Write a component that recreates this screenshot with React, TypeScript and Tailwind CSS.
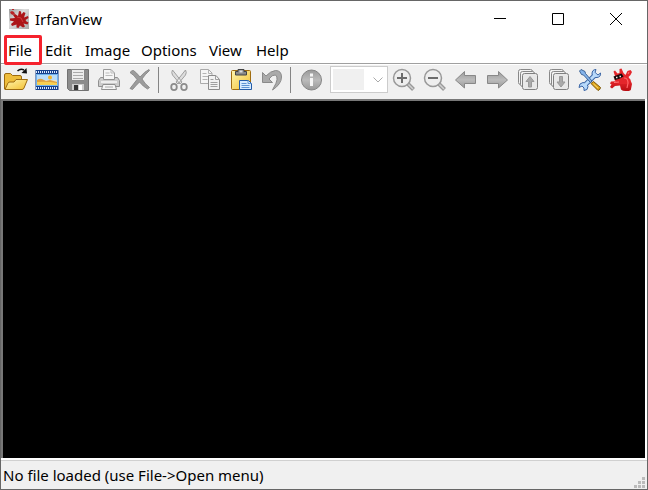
import React from "react";

type IconProps = { children: React.ReactNode };

function Icon({ children }: IconProps) {
  return (
    <svg width="24" height="24" viewBox="0 0 24 24" fill="none" aria-hidden="true">
      {children}
    </svg>
  );
}

const OpenIcon = () => (
  <Icon>
    <path d="M.5 21V7q0-1.500 1.500-1.500h4.500l2 2H16q1.500 0 1.500 1.500v4L4 21z" fill="#eebd3c" stroke="#9c6a10" />
    <path d="M1 21.500L4 15q.5-1 2-1h4l2-2.500h11.500L20 20q-.5 1.500-2 1.500z" fill="url(#gold)" stroke="#9c6a10" />
    <path d="M13.500 3q3-3 6.500-1" stroke="#111" strokeWidth="1.500" />
    <path d="M17.500 5l5.500.5L22.500 0z" fill="#111" />
  </Icon>
);

const SlideshowIcon = () => (
  <Icon>
    <path d="M.5 2h23v20H.5z" fill="#16408c" />
    <path d="M1 6h22v12H1z" fill="#6fb2ee" />
    <path d="M2 7h20v10H2z" fill="#e8e3c8" />
    <path d="M2 7h20v5H2z" fill="#b9dcfa" />
    <path d="M2 12q3-2 5-1l4 2 4-1 7 2v3H2z" fill="#dda040" />
    <path d="M2 14q10-1 20 1v2H2z" fill="#f7cf52" />
    <circle cx="15" cy="9.500" r="2" fill="#f3b52a" />
    <path d="M1 4h22M1 20h22" stroke="#dceaff" strokeWidth="2" strokeDasharray="1 1" />
  </Icon>
);

const SaveIcon = () => (
  <Icon>
    <path d="M1.500 1.500h21v21h-19l-2-2z" fill="#8c8c8c" stroke="#727272" />
    <path d="M5.500 1.500h13v11h-13z" fill="#ededed" stroke="#888" />
    <path d="M7 4.500h10M7 7.500h10M7 10.500h10" stroke="#aaa" />
    <path d="M6 16h12v6H6z" fill="#ccc" />
    <path d="M8 17h4v5H8z" fill="#333" />
    <path d="M13 17h3v5h-3z" fill="#fff" />
  </Icon>
);

const PrintIcon = () => (
  <Icon>
    <path d="M6.500 11V1.500H14l3.500 3.500v6" fill="#f5f5f5" stroke="#999" />
    <path d="M14 1.500V5h3.500M8.500 5h4M8.500 7.500h7" stroke="#bbb" />
    <path d="M3.500 9.500h3v2h11v-2h3l2 3v6h-21v-6z" fill="#ccc" stroke="#909090" />
    <path d="M4 14h16" stroke="#eee" strokeWidth="2" />
    <path d="M6 16.500h12l1.500 5h-15z" fill="#f5f5f5" stroke="#909090" />
    <path d="M8 19h8" stroke="#aaa" />
  </Icon>
);

const DeleteIcon = () => (
  <Icon>
    <path d="M2 4.500q2-2.500 3.500-2Q8.500 4.500 12 9q4.500-5.500 9-7.500l.5 1q-4.500 4-7.500 8.500Q17 16 21.500 19.500l-2 1.500Q15 18.500 11.500 14 7.500 18 4.500 21.500L2 20.500Q5.500 16 9 11.500 6 7 2 4.500z" fill="#9c9c9c" stroke="#808080" strokeWidth=".8" />
  </Icon>
);

const CutIcon = () => (
  <Icon>
    <path d="M5.500 2q-1.500 2.500 0 5l7.500 9 2-2zM18.500 2q1.500 2.500 0 5L11 16l-2-2z" fill="#ddd" stroke="#a0a0a0" />
    <ellipse cx="7" cy="19" rx="2.800" ry="3.200" stroke="#8c8c8c" strokeWidth="1.800" />
    <ellipse cx="17" cy="19" rx="2.800" ry="3.200" stroke="#8c8c8c" strokeWidth="1.800" />
  </Icon>
);

const CopyIcon = () => (
  <Icon>
    <path d="M2.500 1.500h8l3.500 3.500v10.500H2.500z" fill="#f5f5f5" stroke="#aaa" />
    <path d="M10.500 1.500v4H14M4.500 5.500h4M4.500 8.500h7M4.500 11.500h5" stroke="#b4b4b4" />
    <path d="M10.500 7.500h7.500l3.500 4v10h-11z" fill="#f2f2f2" stroke="#8c8c8c" />
    <path d="M17.500 7.500v4h4M12.500 11.500h3M12.500 14.500h7M12.500 16.500h7M12.500 18.500h7" stroke="#a0a0a0" />
  </Icon>
);

const PasteIcon = () => (
  <Icon>
    <rect x="2.500" y="2.500" width="19" height="19" rx="1" fill="url(#gold)" stroke="#a06c10" />
    <path d="M6.500 7V3.500h2.500v-2h6v2h2.500V7z" fill="#8a8a8a" stroke="#444" />
    <path d="M10.500 2.500h3v2h-3z" fill="#ddd" />
    <path d="M10.500 12.500h9l3 3v6h-12z" fill="#d7ebff" stroke="#245ca8" />
    <path d="M19 12.500v3h3.500M12.500 15.500h5M12.500 17.500h8M12.500 19.500h8" stroke="#5d93d2" />
  </Icon>
);

const UndoIcon = () => (
  <Icon>
    <path d="M2.500 4.500v10h10L9 11q3-4.500 6.500-4 4 3-2 13l-1 2q9-6 9-13 0-6.500-6-6.500-5 .5-9.500 5.500z" fill="#aaa" stroke="#8a8a8a" />
  </Icon>
);

const InfoIcon = () => (
  <Icon>
    <circle cx="12.500" cy="12" r="10" fill="url(#metal)" stroke="#858585" />
    <path d="M12.500 5.500v3M12.500 10v8" stroke="#f5f5f5" strokeWidth="3" />
  </Icon>
);

function ZoomIcon({ plus }: { plus: boolean }) {
  return (
    <Icon>
      <path d="M15.500 15.500l6 6" stroke="#999" strokeWidth="4" />
      <path d="M16 16l5 5" stroke="#d0d0d0" strokeWidth="1.500" />
      <circle cx="10" cy="10" r="8.500" fill="#eee" stroke="#999" strokeWidth="1.500" />
      <path d="M5 10h10" stroke="#6c6c6c" strokeWidth="2" />
      {plus && <path d="M10 5v10" stroke="#6c6c6c" strokeWidth="2" />}
    </Icon>
  );
}

const BackIcon = () => (
  <Icon>
    <path d="M1.500 12l9-8.500v4h11v8h-11v4.500z" fill="url(#metal)" stroke="#888" />
  </Icon>
);

const ForwardIcon = () => (
  <Icon>
    <path d="M22.500 12l-9-8.500v4h-11v8h11v4.500z" fill="url(#metal)" stroke="#888" />
  </Icon>
);

function PageIcon({ down }: { down: boolean }) {
  return (
    <Icon>
      <rect x="2.500" y="1.500" width="14" height="15" rx="2" fill="#f2f2f2" stroke="#888" />
      <rect x="4.500" y="3.500" width="14" height="15" rx="2" fill="#f2f2f2" stroke="#888" />
      <rect x="6.500" y="5.500" width="15" height="16" rx="2" fill="#e8e8e8" stroke="#808080" />
      {down ? (
        <path d="M12.500 8.500h3V14H18l-4 5-4-5h2.500z" fill="#aaa" stroke="#999" />
      ) : (
        <path d="M12.500 19h3v-5.500H18l-4-5-4 5h2.500z" fill="#aaa" stroke="#999" />
      )}
    </Icon>
  );
}

const ToolsIcon = () => (
  <Icon>
    <path d="M6 18L18 6" stroke="#3a64a4" strokeWidth="5" />
    <path d="M18 1.500q-4 0-4 4.500 1 4 5 3.500 4-.5 3.500-4.500L20 7l-3-2.500zM6 22.500q4 0 4-4-1-4-5-4-4 .5-4 5l3-1.500 2 2z" fill="#b5d7fb" stroke="#3a64a4" />
    <path d="M6 18L18 6" stroke="#b9dafa" strokeWidth="3" />
    <path d="M1.500 3L3 1.500l4 2 .5 2L14 13l-1.500 1.500L5.500 7l-2-.5z" fill="#86b4ea" stroke="#31598f" strokeWidth=".9" />
    <path d="M13 15.500l2.500-2 7 6q0 2-2.500 3z" fill="#dfa51c" stroke="#7a5407" />
    <path d="M15.500 16l4.500 4" stroke="#f7d566" />
  </Icon>
);

const CatIcon = () => (
  <Icon>
    <path d="M11 13l-9 .5-1 2 1.500 1L1 19l2 1.500 3-2.500 5-.5 1 4q2 2 6 1.500 4 0 4-2l1-5-2-5z" fill="url(#scarlet)" />
    <path d="M6 8L4.500 3.500 6 2.500l2.500 3 2-.5V1l2-.5 2 4.500 2 2 2-4 3-1 1.500 2-1.500 3-2 2 2 3-2 4H9L5.500 12z" fill="#e4262b" />
    <path d="M4.500 8.500l8-3 2 3-3.500 2-5 1.500z" fill="#16090a" />
    <path d="M7 9.500h1.500M10.500 8.500h1.500" stroke="#eee" strokeWidth="1.300" />
    <path d="M15 10q4 0 4 5l-1 5" stroke="#ff6668" strokeWidth="1.200" />
    <path d="M5 14.500l5-.5M20 4l-1 2" stroke="#ff7779" />
  </Icon>
);

const LogoIcon = () => (
  <svg width="20" height="20" viewBox="0 0 20 20" aria-hidden="true">
    <path d="M0 0h20v20H0z" fill="url(#silver)" />
    <path d="M9 7l1-5 2 .5.5 3 2-2.500 2 1-1.500 4.500L19 7l.5 2-3 2 1 1.500 2 1-1 2-4-1 1.500 3-2 1-3-2-1.500 2.500-2-.5v-3L3 17l-1-2 3-2.500-4-1v-2l5-.5-2-3 2-1z" fill="#ac1518" />
    <path d="M1 3l2-1 2 1 1 2-2 1-2-1zM3 0h2v1H3z" fill="#b92427" />
    <path d="M8 8l4 1 2 4" stroke="#d33b3d" fill="none" />
  </svg>
);

function ToolButton({ label, children }: { label: string; children: React.ReactNode }) {
  return (
    <button type="button" aria-label={label} title={label} className="flex h-8 w-[31px] shrink-0 items-center pl-[3px]">
      {children}
    </button>
  );
}

const Separator = () => <div className="mr-[5px] ml-0.5 h-[26px] w-px shrink-0 bg-[#858585]" />;

export default function App() {
  return (
    <div className="flex h-screen flex-col border border-[#666] bg-white font-['Noto_Sans',sans-serif] text-[15px] leading-5 text-black">
      <svg width="0" height="0" className="absolute" aria-hidden="true">
        <defs>
          <linearGradient id="gold" x1="0" y1="0" x2="1" y2="1">
            <stop stopColor="#fff6b0" />
            <stop offset="1" stopColor="#f2bf30" />
          </linearGradient>
          <linearGradient id="metal" x1="0" y1="0" x2="0" y2="1">
            <stop stopColor="#999" />
            <stop offset=".5" stopColor="#bbb" />
            <stop offset="1" stopColor="#999" />
          </linearGradient>
          <linearGradient id="scarlet" x1="0" y1="0" x2="0" y2="1">
            <stop stopColor="#ee2b30" />
            <stop offset="1" stopColor="#b80d12" />
          </linearGradient>
          <linearGradient id="silver" x1="0" y1="0" x2="1" y2="1">
            <stop stopColor="#999" />
            <stop offset=".4" stopColor="#ddd" />
            <stop offset="1" stopColor="#a8a8a8" />
          </linearGradient>
        </defs>
      </svg>
      <header className="flex h-9 shrink-0 items-center pr-0.5 pl-2">
        <LogoIcon />
        <h1 className="ml-1.5 flex-1">IrfanView</h1>
        <button type="button" aria-label="Minimize" className="flex h-9 w-[58px] items-center justify-center">
          <svg width="12" height="12"><path d="M0 5.500h12" stroke="#000" /></svg>
        </button>
        <button type="button" aria-label="Maximize" className="flex h-9 w-[58px] items-center justify-center">
          <svg width="12" height="12"><path d="M.5.5h11v11H.5z" stroke="#000" fill="none" /></svg>
        </button>
        <button type="button" aria-label="Close" className="flex h-9 w-[58px] items-center justify-center">
          <svg width="12" height="12"><path d="M0 0l12 12M12 0L0 12" stroke="#000" /></svg>
        </button>
      </header>
      <nav className="relative z-10 flex h-[26px] shrink-0 items-center pl-[3px]">
        <button type="button" className="mr-[3px] h-[30px] w-[38px] shrink-0 rounded-xs border-3 border-[#f5222d] pl-px text-left">File</button>
        <button type="button" className="w-10 text-left">Edit</button>
        <button type="button" className="w-14 text-left">Image</button>
        <button type="button" className="w-[68px] text-left">Options</button>
        <button type="button" className="w-[47px] text-left">View</button>
        <button type="button">Help</button>
      </nav>
      <div role="toolbar" aria-label="Main toolbar" className="flex h-9 shrink-0 items-center border-t border-[#a0a0a0] bg-[#f0f0f0] pb-1 shadow-[inset_0_1px_#fff]">
        <ToolButton label="Open"><OpenIcon /></ToolButton>
        <ToolButton label="Slideshow"><SlideshowIcon /></ToolButton>
        <ToolButton label="Save"><SaveIcon /></ToolButton>
        <ToolButton label="Print"><PrintIcon /></ToolButton>
        <ToolButton label="Delete"><DeleteIcon /></ToolButton>
        <Separator />
        <ToolButton label="Cut"><CutIcon /></ToolButton>
        <ToolButton label="Copy"><CopyIcon /></ToolButton>
        <ToolButton label="Paste"><PasteIcon /></ToolButton>
        <ToolButton label="Undo"><UndoIcon /></ToolButton>
        <Separator />
        <ToolButton label="Information"><InfoIcon /></ToolButton>
        <div className="mr-px ml-[3px] grid h-[27px] w-[58px] shrink-0 items-center border border-[#ccc] bg-white">
          <select aria-label="Zoom" disabled className="col-start-1 row-start-1 ml-0.5 h-[21px] w-[31px] appearance-none bg-[#f0f0f0]" />
          <svg width="10" height="6" className="col-start-1 row-start-1 mr-1 justify-self-end"><path d="M.5.5L5 5 9.500.5" stroke="#aaa" fill="none" /></svg>
        </div>
        <ToolButton label="Zoom in"><ZoomIcon plus /></ToolButton>
        <ToolButton label="Zoom out"><ZoomIcon plus={false} /></ToolButton>
        <ToolButton label="Previous file"><BackIcon /></ToolButton>
        <ToolButton label="Next file"><ForwardIcon /></ToolButton>
        <ToolButton label="Previous page"><PageIcon down={false} /></ToolButton>
        <ToolButton label="Next page"><PageIcon down /></ToolButton>
        <ToolButton label="Settings"><ToolsIcon /></ToolButton>
        <ToolButton label="About"><CatIcon /></ToolButton>
      </div>
      <main className="mr-0.5 flex-1 border-t-2 border-l-2 border-[#777] bg-black" />
      <footer className="mt-0.5 flex h-[29px] shrink-0 items-center border-t border-[#d0d0d0] bg-[#f0f0f0] pr-px pl-0.5">
        <p className="flex-1">No file loaded (use File-&gt;Open menu)</p>
        <svg width="12" height="12" className="self-end" aria-hidden="true"><path d="M8 0h3v3H8zM4 4h3v3H4zM8 4h3v3H8zM0 8h3v3H0zM4 8h3v3H4zM8 8h3v3H8z" fill="#bbb" /></svg>
      </footer>
    </div>
  );
}
